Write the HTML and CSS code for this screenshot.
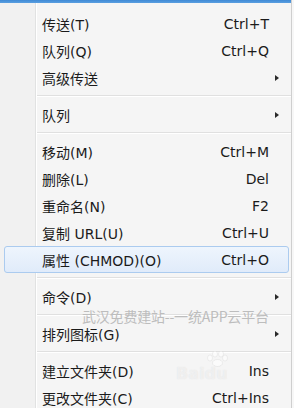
FILE: index.html
```html
<!DOCTYPE html>
<html lang="zh-CN">
<head>
<meta charset="utf-8">
<title>菜单</title>
<link rel="stylesheet" href="styles.css">
</head>
<body>
<div class="menu">
  <div class="topbar"></div>
  <div class="items">
    <div class="row"><span class="label">传送(T)</span><span class="key">Ctrl+T</span><span class="sub"></span></div>
    <div class="row"><span class="label">队列(Q)</span><span class="key">Ctrl+Q</span><span class="sub"></span></div>
    <div class="row"><span class="label">高级传送</span><span class="key"></span><span class="sub"><i class="arrow"></i></span></div>
    <div class="sep"></div>
    <div class="row"><span class="label">队列</span><span class="key"></span><span class="sub"><i class="arrow"></i></span></div>
    <div class="sep"></div>
    <div class="row"><span class="label">移动(M)</span><span class="key">Ctrl+M</span><span class="sub"></span></div>
    <div class="row"><span class="label">删除(L)</span><span class="key">Del</span><span class="sub"></span></div>
    <div class="row"><span class="label">重命名(N)</span><span class="key">F2</span><span class="sub"></span></div>
    <div class="row"><span class="label">复制 URL(U)</span><span class="key">Ctrl+U</span><span class="sub"></span></div>
    <div class="row hover"><span class="label">属性 (CHMOD)(O)</span><span class="key">Ctrl+O</span><span class="sub"></span></div>
    <div class="sep"></div>
    <div class="row"><span class="label">命令(D)</span><span class="key"></span><span class="sub"><i class="arrow"></i></span></div>
    <div class="sep"></div>
    <div class="row"><span class="label">排列图标(G)</span><span class="key"></span><span class="sub"><i class="arrow"></i></span></div>
    <div class="sep"></div>
    <div class="row"><span class="label">建立文件夹(D)</span><span class="key">Ins</span><span class="sub"></span></div>
    <div class="row"><span class="label">更改文件夹(C)</span><span class="key">Ctrl+Ins</span><span class="sub"></span></div>
  </div>
  <div class="watermark">武汉免费建站--一统APP云平台</div>
  <svg class="paw" width="22" height="16" viewBox="0 0 22 16" aria-hidden="true">
    <ellipse cx="4" cy="7" rx="2.5" ry="3" />
    <ellipse cx="9" cy="3" rx="2.5" ry="3" />
    <ellipse cx="15" cy="3" rx="2.5" ry="3" />
    <ellipse cx="19" cy="7" rx="2.5" ry="3" />
    <ellipse cx="11.5" cy="12" rx="5" ry="3.5" />
  </svg>
  <div class="baidu">Baidu</div>
</div>
</body>
</html>
```
FILE: styles.css
```css
html, body {
  margin: 0;
  padding: 0;
  background: #f7f7f7;
}
body {
  width: 294px;
  height: 408px;
  overflow: hidden;
  font-family: "DejaVu Sans", "Noto Sans CJK SC", sans-serif;
  font-size: 14px;
  color: #1b1b1b;
}
.menu {
  position: relative;
  width: 291px;
  height: 408px;
  border-right: 1px solid #cfcfcf;
  background: linear-gradient(to right, #f1f1f1 0 35px, #e1e2e2 35px 36px, #ffffff 36px 37px, #f5f5f5 37px);
  overflow: hidden;
}
.topbar {
  height: 3px;
  background: linear-gradient(#3f8ad6, #5a9fe0);
}
.items {
  display: flex;
  flex-direction: column;
  padding-top: 7px;
}
.row {
  display: flex;
  align-items: center;
  height: 27px;
  box-sizing: border-box;
  padding-left: 42px;
  white-space: nowrap;
}
.label {
  flex: 1;
}
.key {
  text-align: right;
}
.sub {
  width: 22px;
  display: flex;
  align-items: center;
  padding-left: 6px;
  box-sizing: border-box;
}
.arrow {
  display: block;
  width: 0;
  height: 0;
  border-left: 4px solid #2a2a2a;
  border-top: 3.5px solid transparent;
  border-bottom: 3.5px solid transparent;
}
.row.hover {
  margin: 0 2px 0 4px;
  padding-left: 37px;
  border: 1px solid #abcbef;
  border-radius: 3px;
  background: linear-gradient(#eef5fd, #e0ebfa);
}
.row.hover .sub {
  width: 19px;
}
.sep {
  height: 10px;
  box-sizing: border-box;
  margin-left: 37px;
  padding-top: 4px;
}
.sep::before {
  content: "";
  display: block;
  height: 1px;
  background: #e0e0e0;
  border-bottom: 1px solid #ffffff;
}
.watermark {
  position: absolute;
  left: 82px;
  top: 306px;
  font-family: "Noto Sans CJK SC", "DejaVu Sans", sans-serif;
  font-size: 14px;
  color: #bdbdbd;
  white-space: nowrap;
  letter-spacing: -0.2px;
}
.paw {
  position: absolute;
  left: 206px;
  top: 351px;
  fill: rgba(255, 255, 255, 0.55);
  stroke: rgba(190, 190, 190, 0.35);
  stroke-width: 0.6;
}
.baidu {
  position: absolute;
  left: 176px;
  top: 364px;
  font-family: "DejaVu Sans", sans-serif;
  font-size: 16px;
  font-weight: bold;
  color: rgba(255, 255, 255, 0.5);
  text-shadow: 0 0 1px rgba(170, 170, 170, 0.3);
  white-space: nowrap;
}
```
